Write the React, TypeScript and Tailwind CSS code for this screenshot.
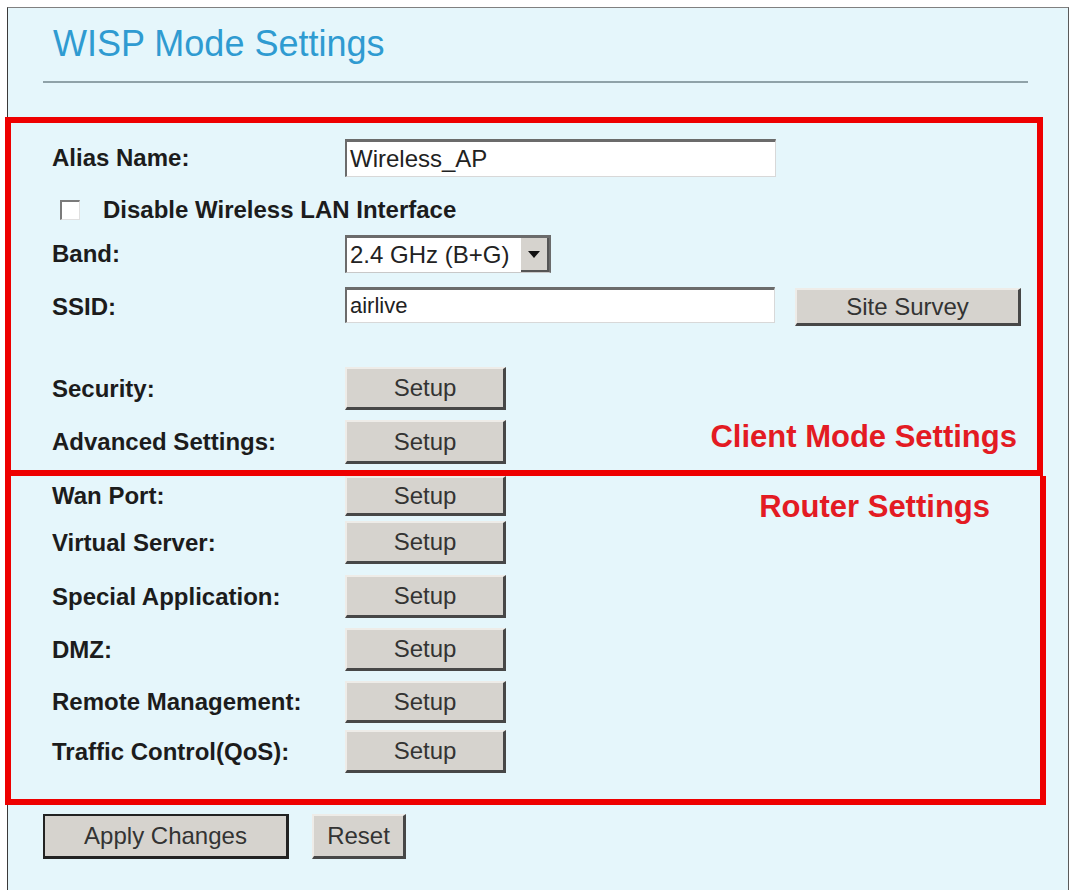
import type { ReactNode } from 'react';

const btn =
  'flex items-center justify-center bg-[#d6d3ce] border-t-2 border-l-2 border-t-[#eeece8] border-l-[#eeece8] border-r-[3px] border-b-[3px] border-r-[#474747] border-b-[#474747] text-[24px] text-[#333] leading-none';

function Label({ children }: { children: ReactNode }) {
  return (
    <div className="w-[334px] shrink-0 pl-[41px] text-[24px] font-bold leading-none text-[#1c1c1c]">
      {children}
    </div>
  );
}

function Setup({ className = '' }: { className?: string }) {
  return <button className={`${btn} w-[161px] h-full ${className}`}>Setup</button>;
}

export default function App() {
  return (
    <div className="w-[1071px] h-[890px] bg-white overflow-hidden font-['Liberation_Sans',Arial,sans-serif]">
      <div className="ml-[7px] mt-[7px] w-[1062px] h-[883px] bg-[#e5f6fb] border-l border-t border-r border-l-[#3a3a3a] border-t-[#808080] border-r-[#5a5a5a]">
        {/* title */}
        <h1 className="mt-[18px] ml-[45px] text-[36px] leading-none text-[#2f9bd1]">WISP Mode Settings</h1>
        <div className="mt-[19px] ml-[35px] w-[985px] h-[2px] bg-[#8fa2a8]" />

        {/* client mode settings */}
        <div className="mt-[34px] -ml-[3px] w-[1038px] border-[6px] border-[#ee0000] pb-[6px]">
          <div className="flex items-center h-[38px] mt-[16px]">
            <Label>Alias Name:</Label>
            <div className="w-[431px] h-full bg-white border-t-[3px] border-l-2 border-r border-b border-t-[#6b6b6b] border-l-[#6b6b6b] border-r-[#d8d8d8] border-b-[#d8d8d8] pl-[3px] flex items-center text-[24px] leading-none text-[#222]">
              Wireless_AP
            </div>
          </div>

          <div className="flex items-center h-[24px] mt-[21px] pl-[49px]">
            <div className="w-[20px] h-[20px] bg-white border-t-2 border-l-2 border-r border-b border-t-[#7a7a7a] border-l-[#7a7a7a] border-r-[#e0e0e0] border-b-[#e0e0e0]" />
            <span className="ml-[23px] text-[24px] font-bold leading-none text-[#1c1c1c]">Disable Wireless LAN Interface</span>
          </div>

          <div className="flex items-center h-[38px] mt-[13px]">
            <Label>Band:</Label>
            <div className="w-[206px] h-full bg-white border-t-[3px] border-l-2 border-r-2 border-b border-t-[#6b6b6b] border-l-[#6b6b6b] border-r-[#6b6b6b] border-b-[#c8c8c8] flex items-center">
              <span className="pl-[3px] text-[24px] leading-none text-[#222] flex-1">2.4 GHz (B+G)</span>
              <div className="w-[28px] h-full bg-[#d6d3ce] border-r-2 border-b-2 border-[#555] flex items-center justify-center">
                <svg width="12" height="7" viewBox="0 0 12 7">
                  <path d="M0 0h12L6 7z" fill="#111" />
                </svg>
              </div>
            </div>
          </div>

          <div className="flex items-center h-[39px] mt-[14px]">
            <Label>SSID:</Label>
            <div className="w-[430px] h-[36px] self-start bg-white border-t-[3px] border-l-2 border-r border-b border-t-[#6b6b6b] border-l-[#6b6b6b] border-r-[#d8d8d8] border-b-[#d8d8d8] pl-[3px] flex items-center text-[22px] leading-none text-[#222]">
              airlive
            </div>
            <button className={`${btn} ml-[20px] w-[226px] h-[38px] self-end`}>Site Survey</button>
          </div>

          <div className="flex items-center h-[43px] mt-[41px]">
            <Label>Security:</Label>
            <Setup />
          </div>

          <div className="flex items-center h-[44px] mt-[10px]">
            <Label>Advanced Settings:</Label>
            <Setup />
            <span className="ml-auto mr-[20px] self-start mt-[1px] text-[31px] font-bold leading-none text-[#e31b23]">
              Client Mode Settings
            </span>
          </div>
        </div>

        {/* router settings */}
        <div className="-ml-[3px] w-[1041px] border-[6px] border-t-0 border-[#ee0000] pb-[26px]">
          <div className="flex items-center h-[40px]">
            <Label>Wan Port:</Label>
            <button className={`${btn} w-[161px] h-full border-t-0`}>Setup</button>
            <span className="ml-auto mr-[50px] self-start mt-[15px] text-[31px] font-bold leading-none text-[#e31b23]">
              Router Settings
            </span>
          </div>
          <div className="flex items-center h-[43px] mt-[5px]">
            <Label>Virtual Server:</Label>
            <Setup />
          </div>
          <div className="flex items-center h-[43px] mt-[11px]">
            <Label>Special Application:</Label>
            <Setup />
          </div>
          <div className="flex items-center h-[43px] mt-[10px]">
            <Label>DMZ:</Label>
            <Setup />
          </div>
          <div className="flex items-center h-[42px] mt-[10px]">
            <Label>Remote Management:</Label>
            <Setup />
          </div>
          <div className="flex items-center h-[43px] mt-[7px]">
            <Label>Traffic Control(QoS):</Label>
            <Setup />
          </div>
        </div>

        {/* actions */}
        <div className="flex mt-[9px] ml-[35px] h-[45px]">
          <button className="w-[246px] h-full flex items-center justify-center bg-[#d6d3ce] border-2 border-[#222] border-r-[3px] border-b-[3px] text-[24px] leading-none text-[#333]">
            Apply Changes
          </button>
          <button className={`${btn} ml-[23px] w-[94px] h-full`}>Reset</button>
        </div>
      </div>
    </div>
  );
}
